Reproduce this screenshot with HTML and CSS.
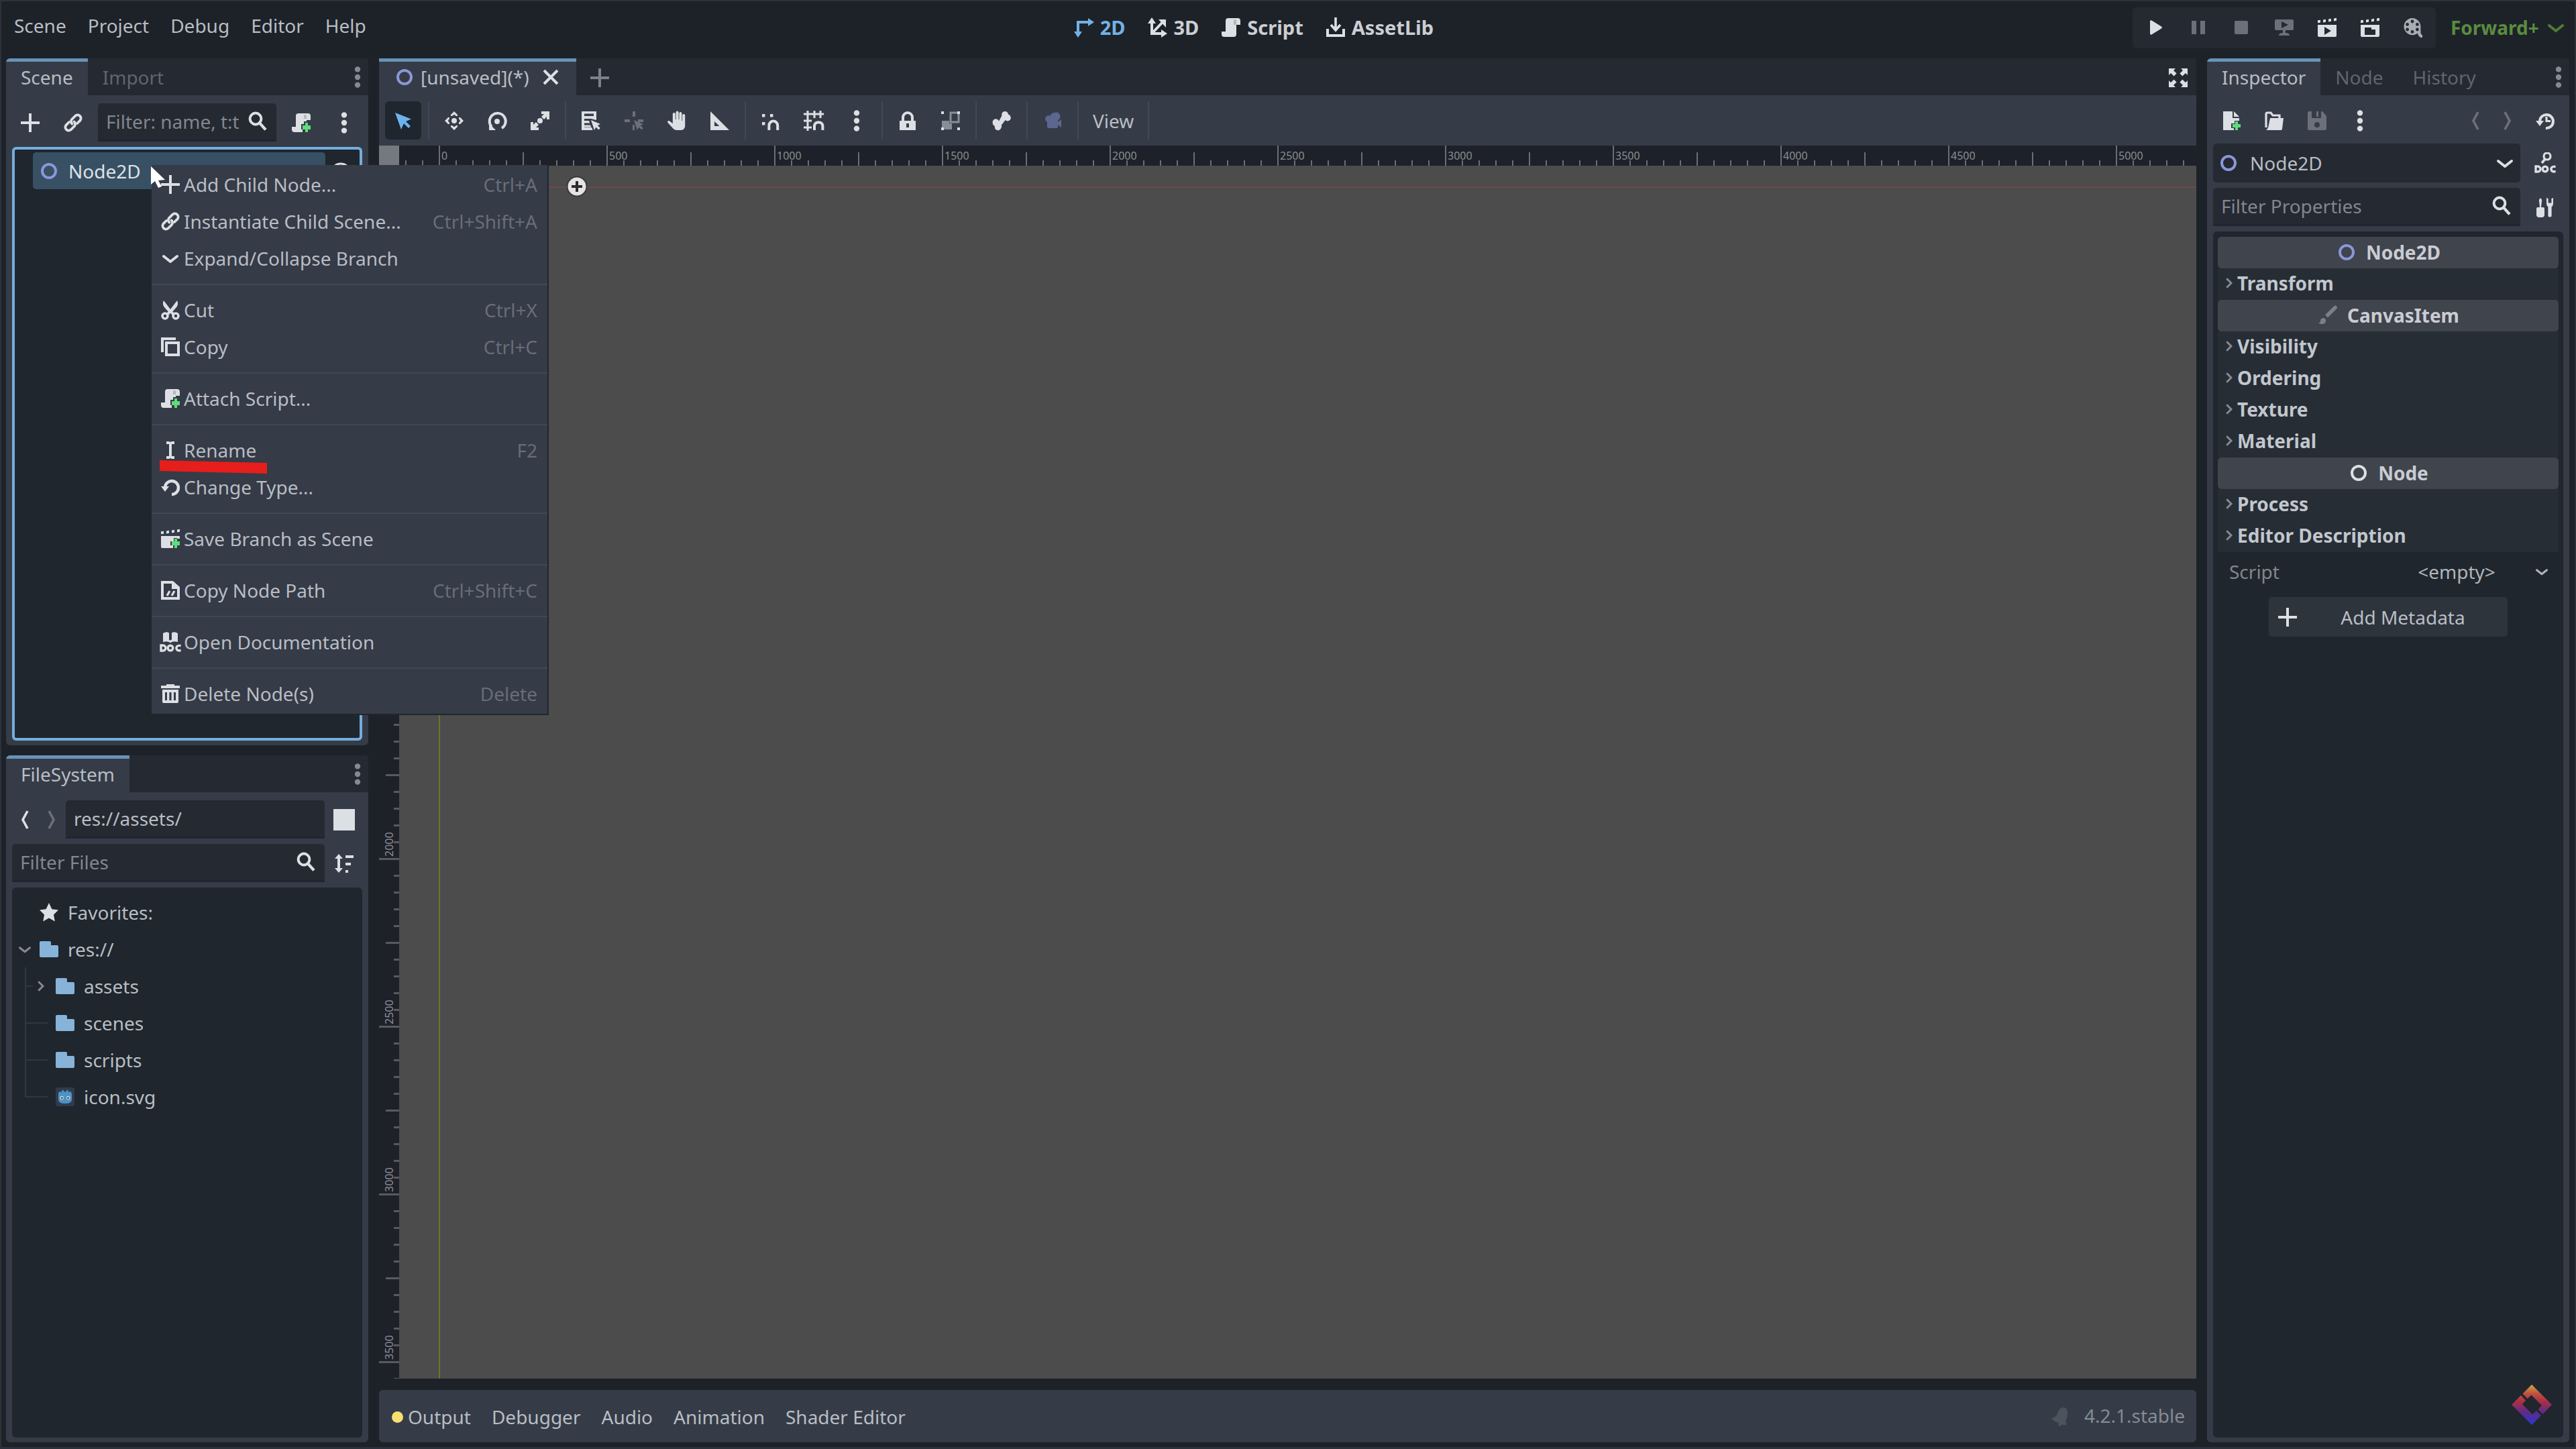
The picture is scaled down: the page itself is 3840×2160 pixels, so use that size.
FILE: index.html
```html
<!DOCTYPE html>
<html lang="en">
  <head>
    <meta charset="UTF-8" />
    <title>Godot Engine</title>
    <link rel="stylesheet" href="styles.css">
  </head>
  <body>
    <!-- Icon set -->
    <svg class="sprite" xmlns="http://www.w3.org/2000/svg">
      <symbol id="add" viewBox="0 0 16 16"><path d="M7 1v6H1v2h6v6h2V9h6V7H9V1z"/></symbol>
      <symbol id="link" viewBox="0 0 16 16"><g fill="none" stroke="currentColor" stroke-width="1.9" stroke-linecap="round"><path d="M7.2 8.800a2.500 2.500 0 0 1-.2-3.300l2.800-2.800a2.500 2.500 0 0 1 3.500 3.500L11 8.500"/><path d="M8.800 7.200a2.500 2.500 0 0 1 .2 3.300l-2.800 2.800a2.500 2.500 0 0 1-3.500-3.500L5 7.500"/></g></symbol>
      <symbol id="search" viewBox="0 0 16 16"><circle cx="6.5" cy="6" r="4.2" fill="none" stroke="currentColor" stroke-width="2"/><path d="M9.6 9.3l4.4 4.9" stroke="currentColor" stroke-width="2.2"/></symbol>
      <symbol id="dots" viewBox="0 0 16 16"><circle cx="8" cy="2.2" r="2.1"/><circle cx="8" cy="8" r="2.1"/><circle cx="8" cy="13.8" r="2.1"/></symbol>
      <symbol id="script" viewBox="0 0 16 16"><path d="M6 1a2 2 0 0 0-2 2v8H1v2a2 2 0 0 0 2 2h7a2 2 0 0 0 2-2V6h3V3a2 2 0 0 0-2-2z"/><path d="M12 6V3a1 1 0 0 0-2 0v3z" fill="#b4b7bb"/></symbol>
      <symbol id="script-add" viewBox="0 0 16 16"><path d="M6 1a2 2 0 0 0-2 2v8H1v2a2 2 0 0 0 2 2h6v-2H8V9h2V7h2V6h3V3a2 2 0 0 0-2-2z"/><path d="M12 5V3a1 1 0 0 0-2 0v2z" fill="#b4b7bb"/><path d="M11 8v2H9v3h2v2h2v-2h2v-3h-2V8z" fill="#5fdc7c"/></symbol>
      <symbol id="node" viewBox="0 0 16 16"><circle cx="8" cy="8" r="5" fill="none" stroke="currentColor" stroke-width="2"/></symbol>
      <symbol id="down" viewBox="0 0 16 16"><path d="M3 6.500l5 4 5-4" fill="none" stroke="currentColor" stroke-width="2" stroke-linecap="round" stroke-linejoin="round"/></symbol>
      <symbol id="right" viewBox="0 0 16 16"><path d="M5.500 3.500L10 8l-4.500 4.500" fill="none" stroke="currentColor" stroke-width="1.900"/></symbol>
      <symbol id="prev" viewBox="0 0 16 16"><path d="M10 1.500L6.500 8l3.500 6.500" fill="none" stroke="currentColor" stroke-width="1.800"/></symbol>
      <symbol id="next" viewBox="0 0 16 16"><path d="M6 1.500L9.500 8 6 14.500" fill="none" stroke="currentColor" stroke-width="1.800"/></symbol>
      <symbol id="cut" viewBox="0 0 16 16"><path d="M3 1C2 3 2.500 4.500 3.500 6L7 10l2 0 3.500-4C13.500 4.500 14 3 13 1L8 7.500z"/><circle cx="4" cy="12.500" r="2" fill="none" stroke="currentColor" stroke-width="1.800"/><circle cx="12" cy="12.500" r="2" fill="none" stroke="currentColor" stroke-width="1.800"/><path d="M6 11l2-2 2 2" fill="none" stroke="currentColor" stroke-width="2"/></symbol>
      <symbol id="copy" viewBox="0 0 16 16"><path d="M2 12V2h10M5 5h9v9H5z" fill="none" stroke="currentColor" stroke-width="2"/></symbol>
      <symbol id="rename" viewBox="0 0 16 16"><path d="M5 1.500h2l1 .5 1-.5h2v2H9v9h2v2H9l-1-.5-1 .5H5v-2h2v-9H5z"/></symbol>
      <symbol id="reload" viewBox="0 0 16 16"><path d="M4 8a5 5 0 1 1 5 5.500" fill="none" stroke="currentColor" stroke-width="2.200"/><path d="M1 7.500h6L4 11.500z"/></symbol>
      <symbol id="clap-add" viewBox="0 0 16 16"><path d="M1 2.600l2-.2v2l-2 .2zM5 2.200l2-.3v2l-2 .3zM9 1.700l2-.3v2l-2 .3zM13 1.200l2-.3v2l-2 .3z"/><path d="M1 6h14v2h-2V7.500h-2.500V10H8v3h2v2H2a1 1 0 0 1-1-1z"/><path d="M11 8v2H9v3h2v2h2v-2h2v-3h-2V8z" fill="#5fdc7c"/></symbol>
      <symbol id="path" viewBox="0 0 16 16"><path d="M2 2h7.500L14 6v8H2z" fill="none" stroke="currentColor" stroke-width="2"/><path d="M9 1v6h5z"/><path d="M5.500 12l2-3.500M9 12l2-3.500" stroke="currentColor" stroke-width="1.600"/></symbol>
      <symbol id="doc" viewBox="0 0 16 16"><path d="M2.500 1.500Q5 0 7 1.200v5q.5 1 2 0v-5Q11 0 13.500 1.500V8Q10 7 8 8.600 6 7 2.500 8z"/><g fill="none" stroke="currentColor" stroke-width="1.700"><path d="M1 10.500v4h1.500a2 2 0 0 0 0-4z"/><circle cx="8" cy="12.500" r="1.900"/><path d="M15.800 10.700h-1.500a1.800 1.800 0 0 0 0 3.700h1.500"/></g></symbol>
      <symbol id="doc-search" viewBox="0 0 16 16"><circle cx="9.500" cy="3" r="2.500" fill="none" stroke="currentColor" stroke-width="1.600"/><path d="M8 5L5.500 8" stroke="currentColor" stroke-width="1.800"/><g fill="none" stroke="currentColor" stroke-width="1.700"><path d="M1 10.500v4h1.500a2 2 0 0 0 0-4z"/><circle cx="8" cy="12.500" r="1.900"/><path d="M15.800 10.700h-1.500a1.800 1.800 0 0 0 0 3.700h1.500"/></g></symbol>
      <symbol id="trash" viewBox="0 0 16 16"><path d="M5 1h6v1h4v2H1V2h4z"/><path fill-rule="evenodd" d="M2 5h12v9a1 1 0 0 1-1 1H3a1 1 0 0 1-1-1zm2 2v6h1.500V7zm3.200 0v6h1.600V7zm3.300 0v6H12V7z"/></symbol>
      <symbol id="close" viewBox="0 0 16 16"><path d="M3 3l10 10M13 3L3 13" stroke="currentColor" stroke-width="2"/></symbol>
      <symbol id="expand" viewBox="0 0 16 16"><path d="M1 1h5L4.500 2.500l2.300 2.300-2 2L2.500 4.500 1 6zM15 1h-5l1.500 1.500-2.300 2.300 2 2 2.300-2.300L15 6zM1 15h5l-1.500-1.500 2.300-2.300-2-2-2.300 2.300L1 10zM15 15h-5l1.500-1.500-2.300-2.300 2-2 2.300 2.300L15 10z"/></symbol>
      <symbol id="select" viewBox="0 0 16 16"><path d="M2 2l4.500 12.500 2-4.500 3.500 3.500 1.500-1.500L10 8.500 14 6.700z"/></symbol>
      <symbol id="move" viewBox="0 0 16 16"><circle cx="8" cy="8" r="2"/><path d="M8 1l2.500 2.500v1h-1L8 3.400 6.500 4.500h-1v-1zM8 15l2.500-2.500v-1h-1L8 12.600l-1.500-1.100h-1v1zM1 8l2.500-2.500h1v1L3.400 8l1.100 1.500v1h-1zM15 8l-2.500-2.500h-1v1L12.600 8l-1.100 1.500v1h1z"/></symbol>
      <symbol id="rotate" viewBox="0 0 16 16"><circle cx="8" cy="8.500" r="2"/><path d="M11.500 13.500A6 6 0 1 0 4 12.500" fill="none" stroke="currentColor" stroke-width="2"/><path d="M2 10v5h5z"/></symbol>
      <symbol id="scale" viewBox="0 0 16 16"><circle cx="8" cy="8" r="2"/><path d="M9 1h6v6h-2V5l-2 2-2-2 2-2H9zM1 9h2v2l2-2 2 2-2 2h2v2H1z"/></symbol>
      <symbol id="list" viewBox="0 0 16 16"><path fill-rule="evenodd" d="M1 1h11v6.500L8 6.500H3V8h3.500l.6 1.800H3v1.400h4.500l.7 1.600H3V13h5.500l.8 2H1zm2 1.800v1.700h7V2.800z"/><path d="M8 7.500l2.500 7.500 1.200-2.300 2 2 1.200-1.200-2-2L15 10.500z"/></symbol>
      <symbol id="pivot" viewBox="0 0 16 16"><path d="M7 1h2v4H7zM1 7h4v2H1zM11 7h4v2h-4zM7 11h1.500v4H7z"/><path d="M8 7.500l2.500 7.500 1.200-2.300 2 2 1.200-1.200-2-2L15 10.500z"/></symbol>
      <symbol id="hand" viewBox="0 0 16 16"><path d="M7.300 1.800a1 1 0 0 1 2 0V7h.4V2.500a1 1 0 0 1 2 0V8h.4V4a1 1 0 0 1 2 0v8a3 3 0 0 1-3 3H8c-1.500 0-2.500-.8-3.500-2L1.300 9.500C.5 8.200 2 7.600 2.800 8.400L4.900 10V3a1 1 0 0 1 2 0v4h.4z"/></symbol>
      <symbol id="ruler" viewBox="0 0 16 16"><path fill-rule="evenodd" d="M1 1l14 14H1zm3 7.500V12h3.700z"/></symbol>
      <symbol id="snap" viewBox="0 0 16 16"><path d="M1.500 3h2.200v2.200H1.500zM7.500 3h2.200v2.200H7.500zM1.500 9h2.200v2.200H1.500z"/><path d="M6.700 15v-3.500a3.200 3.200 0 0 1 6.400 0V15" fill="none" stroke="currentColor" stroke-width="2"/></symbol>
      <symbol id="grid" viewBox="0 0 16 16"><path d="M3.500 .500v15M8.500 .500V6M13 .500V6M.500 3h15M.500 8h6M.500 13h6" stroke="currentColor" stroke-width="1.500"/><path d="M8.500 15v-3.500a3.200 3.200 0 0 1 6.200 0V15" fill="none" stroke="currentColor" stroke-width="2"/></symbol>
      <symbol id="lock" viewBox="0 0 16 16"><path d="M4.500 8V5.500a3.500 3.500 0 0 1 7 0V8" fill="none" stroke="currentColor" stroke-width="2"/><path fill-rule="evenodd" d="M2 8h12v7H2zm5 2v3h2v-3z"/></symbol>
      <symbol id="group" viewBox="0 0 16 16"><path d="M1.500 8H7v2h2v4.500H1.500z" opacity=".5"/><path d="M8 2h6v7H8z" fill="none" stroke="currentColor" stroke-width="1.500" opacity=".5"/><path d="M1 1h2v2H1zM13 1h2v2h-2zM1 13h2v2H1zM13 13h2v2h-2z"/></symbol>
      <symbol id="bone" viewBox="0 0 16 16"><path d="M10.500 1a2.400 2.400 0 0 0-2.300 3.200L6 8.300a2.400 2.400 0 0 0-4.600 1.500A2.400 2.400 0 0 0 3 12a2.400 2.400 0 0 0 4.600 1.500 2.400 2.400 0 0 0 .3-2.300L10.800 7.500a2.400 2.400 0 0 0 4-2.300A2.400 2.400 0 0 0 13 3.300 2.400 2.400 0 0 0 10.500 1z"/></symbol>
      <symbol id="camera" viewBox="0 0 16 16"><path d="M9.500 2a3 3 0 0 0-3 2.300A2.500 2.500 0 1 0 4 9v3.500a1 1 0 0 0 1 1h6a1 1 0 0 0 1-1V11l2.500 2V7L12 9V7.500A3 3 0 0 0 9.500 2z"/></symbol>
      <symbol id="w2d" viewBox="0 0 16 16"><path d="M3.500 12V4H12" fill="none" stroke="currentColor" stroke-width="2"/><path d="M.5 11h6l-3 4.500zM11 1l4.500 3L11 7z"/></symbol>
      <symbol id="w3d" viewBox="0 0 16 16"><path d="M4 4v8.500h8M4.500 12L12 4" fill="none" stroke="currentColor" stroke-width="2"/><path d="M1 5l3-4.500L7 5zM11 9.500l4.500 3-4.500 3zM9 2h5.500v6z"/></symbol>
      <symbol id="lib" viewBox="0 0 16 16"><path d="M2 9v5h12V9" fill="none" stroke="currentColor" stroke-width="2"/><path d="M8 .5V9M4.500 6L8 10l3.500-4" fill="none" stroke="currentColor" stroke-width="1.800"/></symbol>
      <symbol id="play" viewBox="0 0 16 16"><path d="M4 3.500v9a.8.8 0 0 0 1.200.7l7.300-4.500a.8.8 0 0 0 0-1.400L5.200 2.800A.8.8 0 0 0 4 3.500z"/></symbol>
      <symbol id="pause" viewBox="0 0 16 16"><path d="M3 3h3.500v10H3zM9.500 3H13v10H9.500z"/></symbol>
      <symbol id="stop" viewBox="0 0 16 16"><rect x="3" y="3" width="10" height="10" rx="1"/></symbol>
      <symbol id="remote" viewBox="0 0 16 16"><path fill-rule="evenodd" d="M2 2h12a1 1 0 0 1 1 1v6a1 1 0 0 1-1 1H9v2q3 0 3 2H4q0-2 3-2v-2H2a1 1 0 0 1-1-1V3a1 1 0 0 1 1-1zm4 1.500v5l5-2.500z"/></symbol>
      <symbol id="clap-play" viewBox="0 0 16 16"><path d="M1 2.600l2-.2v2l-2 .2zM5 2.200l2-.3v2l-2 .3zM9 1.700l2-.3v2l-2 .3zM13 1.200l2-.3v2l-2 .3z"/><path fill-rule="evenodd" d="M1 6h14v8a1 1 0 0 1-1 1H2a1 1 0 0 1-1-1zm5 1.500v6l5-3z"/></symbol>
      <symbol id="clap-dir" viewBox="0 0 16 16"><path d="M1 2.600l2-.2v2l-2 .2zM5 2.200l2-.3v2l-2 .3zM9 1.700l2-.3v2l-2 .3zM13 1.200l2-.3v2l-2 .3z"/><path fill-rule="evenodd" d="M1 6h14v8a1 1 0 0 1-1 1H2a1 1 0 0 1-1-1zm3 2v5.500h8V9.500H9V8z"/></symbol>
      <symbol id="reel" viewBox="0 0 16 16"><path fill-rule="evenodd" d="M7.500 1a6.300 6.300 0 1 0 4 11.200c.3 2 1.500 3.300 3.500 3.300v-2c-1.500 0-1.300-2-1.300-6.200A6.300 6.300 0 0 0 7.500 1zm0 1.300a1.200 1.200 0 1 1 0 2.400 1.200 1.200 0 0 1 0-2.400zM3.800 4.500a1.200 1.200 0 1 1 0 2.400 1.200 1.200 0 0 1 0-2.400zm7.400 0a1.200 1.200 0 1 1 0 2.400 1.200 1.200 0 0 1 0-2.400zM3.800 8.300a1.200 1.200 0 1 1 0 2.400 1.200 1.200 0 0 1 0-2.400zm7.400 0a1.200 1.200 0 1 1 0 2.400 1.200 1.200 0 0 1 0-2.400zM7.500 10a1.200 1.200 0 1 1 0 2.400 1.200 1.200 0 0 1 0-2.400z"/></symbol>
      <symbol id="file-add" viewBox="0 0 16 16"><path d="M2 1h7v5h5v2h-3.500v2H8v3.500h2V15H2z"/><path d="M10 1l4 4h-4z"/><path d="M11 8.500v2H9v2.500h2v2h2v-2h2v-2.500h-2v-2z" fill="#5fdc7c"/></symbol>
      <symbol id="folder-open" viewBox="0 0 16 16"><path d="M2 13V3a1 1 0 0 1 1-1h2.500l1.500 2h5v2" fill="none" stroke="currentColor" stroke-width="1.600"/><path d="M5 6h10l-1 8a1 1 0 0 1-1 1H2q1.500-1 2-4z"/></symbol>
      <symbol id="save" viewBox="0 0 16 16"><path fill-rule="evenodd" d="M2 1h10l3 3.500V14a1 1 0 0 1-1 1H2a1 1 0 0 1-1-1V2a1 1 0 0 1 1-1zm2 0v5h7V1H9v4H7.500V1zm4 8a2 2 0 1 0 0 4 2 2 0 0 0 0-4z"/></symbol>
      <symbol id="history" viewBox="0 0 16 16"><path d="M4 8a5 5 0 1 1 4.500 5.500" fill="none" stroke="currentColor" stroke-width="2"/><path d="M1 8h6l-3 4zM8.200 5h1.600v2.500H12V9H8.200z"/></symbol>
      <symbol id="tools" viewBox="0 0 16 16"><path d="M4.500 1L5.600 2.500 5 8h1.500a1 1 0 0 1 1 1v4.500a2 2 0 0 1-2 2h-2a2 2 0 0 1-2-2V9a1 1 0 0 1 1-1H4L3.400 2.500zM9 1v4q0 2 1.200 2.600V14a1.300 1.300 0 0 0 2.600 0V7.600Q14 7 14 5V1l-1.300.5v3.300h-2.400V1.500z"/></symbol>
      <symbol id="sort" viewBox="0 0 16 16"><path d="M4 1l3 3.500H5v7h2L4 15l-3-3.500h2v-7H1zM9 2h6v2H9zM9 7.500h4v2H9zM9 13h2v2H9z"/></symbol>
      <symbol id="star" viewBox="0 0 16 16"><path d="M8 1l2.200 4.600 4.800.6-3.500 3.500.9 5L8 12.200 3.600 14.700l.9-5L1 6.200l4.800-.6z"/></symbol>
      <symbol id="folder" viewBox="0 0 16 16"><path d="M2 2a1 1 0 0 0-1 1v10a1 1 0 0 0 1 1h12a1 1 0 0 0 1-1V6a1 1 0 0 0-1-1H9.500V3a1 1 0 0 0-1-1z"/></symbol>
      <symbol id="godot" viewBox="0 0 16 16"><rect x="1" y="1" width="14" height="14" rx="2" fill="#313b4e"/><path d="M3 5.500l1-1.500 1.500.5.3-1.500h1l.5 1.200h1.400L9.200 3h1l.3 1.500L12 4l1 1.500V10q0 3-5 3t-5-3z" fill="#4d92c4"/><circle cx="5.600" cy="8.800" r="1.400" fill="#bcd6e6"/><circle cx="10.400" cy="8.800" r="1.400" fill="#bcd6e6"/><circle cx="5.700" cy="8.900" r=".7" fill="#313b4e"/><circle cx="10.300" cy="8.900" r=".7" fill="#313b4e"/></symbol>
      <symbol id="brush" viewBox="0 0 16 16"><path d="M14.500 1.200a1.500 1.500 0 0 0-2 0L6 7.800l2 2 6.500-6.500a1.500 1.500 0 0 0 0-2.100zM4.500 10a2.400 2.400 0 0 0-2 2.500c0 .8-.7 1-1.500 1 1.500 1.700 5.500 1.500 5.500-1.500a2 2 0 0 0-2-2z"/></symbol>
      <symbol id="bell" viewBox="0 0 16 16"><path d="M11 1.500Q7 1.500 6 6 5 9 1.500 9.500L4 12l3 1-.5 2 2 .5 1-1.500 1.500 1 2-1-1-2 1.500-4Q14 2 11 1.500z"/></symbol>
      <symbol id="eye" viewBox="0 0 16 16"><path d="M1 9q2-6 7-6t7 6q-2 5-7 5t-7-5z" fill="none" stroke="currentColor" stroke-width="1.600"/><circle cx="8" cy="9" r="2"/></symbol>
    </svg>

    <header class="topbar">
      <nav class="main-menu">
        <button>Scene</button>
        <button>Project</button>
        <button>Debug</button>
        <button>Editor</button>
        <button>Help</button>
      </nav>
      <div class="workspaces">
        <button class="active"><svg class="icon"><use href="#w2d"/></svg>2D</button>
        <button><svg class="icon"><use href="#w3d"/></svg>3D</button>
        <button><svg class="icon"><use href="#script"/></svg>Script</button>
        <button><svg class="icon"><use href="#lib"/></svg>AssetLib</button>
      </div>
      <div class="run-area">
        <div class="run-bar">
          <button class="tool" aria-label="Run Project"><svg class="icon"><use href="#play"/></svg></button>
          <button class="tool off" aria-label="Pause"><svg class="icon"><use href="#pause"/></svg></button>
          <button class="tool off" aria-label="Stop"><svg class="icon"><use href="#stop"/></svg></button>
          <button class="tool off" aria-label="Remote Debug"><svg class="icon"><use href="#remote"/></svg></button>
          <button class="tool" aria-label="Run Current Scene"><svg class="icon"><use href="#clap-play"/></svg></button>
          <button class="tool" aria-label="Run Specific Scene"><svg class="icon"><use href="#clap-dir"/></svg></button>
          <button class="tool dim" aria-label="Movie Maker"><svg class="icon"><use href="#reel"/></svg></button>
        </div>
        <div class="renderer">
          <select aria-label="Renderer"><option>Forward+</option></select>
          <svg class="icon"><use href="#down"/></svg>
        </div>
      </div>
    </header>

    <main class="editor">
      <!-- Left docks -->
      <div class="column">
        <section class="dock">
          <div class="tabs">
            <button class="tab active">Scene</button>
            <button class="tab">Import</button>
            <button class="tab-dots" aria-label="Dock options"><svg class="icon"><use href="#dots"/></svg></button>
          </div>
          <div class="dock-body">
            <div class="row">
              <button class="tool" aria-label="Add Child Node"><svg class="icon"><use href="#add"/></svg></button>
              <button class="tool" aria-label="Instantiate Child Scene"><svg class="icon"><use href="#link"/></svg></button>
              <div class="field">
                <input type="text" aria-label="Filter nodes" placeholder="Filter: name, t:type">
                <svg class="icon"><use href="#search"/></svg>
              </div>
              <button class="tool" aria-label="Attach Script"><svg class="icon"><use href="#script-add"/></svg></button>
              <button class="tool" aria-label="More"><svg class="icon"><use href="#dots"/></svg></button>
            </div>
            <div class="tree scene-tree">
              <div class="scene-node">
                <svg class="icon node2d"><use href="#node"/></svg>Node2D
              </div>
              <svg class="icon"><use href="#eye"/></svg>
            </div>
          </div>
        </section>

        <section class="dock">
          <div class="tabs">
            <button class="tab active">FileSystem</button>
            <button class="tab-dots" aria-label="Dock options"><svg class="icon"><use href="#dots"/></svg></button>
          </div>
          <div class="dock-body">
            <div class="row tight">
              <button class="arrow" aria-label="Back"><svg class="icon"><use href="#prev"/></svg></button>
              <button class="arrow off" aria-label="Forward"><svg class="icon"><use href="#next"/></svg></button>
              <div class="field"><input class="path" type="text" aria-label="Path" value="res://assets/"></div>
              <button class="tool" aria-label="Toggle split mode"><span class="split"></span></button>
            </div>
            <div class="row tight">
              <div class="field">
                <input type="text" aria-label="Filter files" placeholder="Filter Files">
                <svg class="icon"><use href="#search"/></svg>
              </div>
              <button class="tool" aria-label="Sort"><svg class="icon"><use href="#sort"/></svg></button>
            </div>
            <ul class="tree files">
              <li><span class="fold"></span><svg class="icon"><use href="#star"/></svg>Favorites:</li>
              <li><svg class="icon fold"><use href="#down"/></svg><svg class="icon folder"><use href="#folder"/></svg>res://</li>
              <li class="child foldable"><svg class="icon fold"><use href="#right"/></svg><svg class="icon folder"><use href="#folder"/></svg>assets</li>
              <li class="child"><span class="fold"></span><svg class="icon folder"><use href="#folder"/></svg>scenes</li>
              <li class="child"><span class="fold"></span><svg class="icon folder"><use href="#folder"/></svg>scripts</li>
              <li class="child last"><span class="fold"></span><svg class="icon"><use href="#godot"/></svg>icon.svg</li>
            </ul>
          </div>
        </section>
      </div>

      <!-- Viewport -->
      <div class="column center">
        <section class="scene-view">
          <div class="tabs">
            <button class="tab active scene-tab"><svg class="icon node2d"><use href="#node"/></svg>[unsaved](*)<svg class="icon close"><use href="#close"/></svg></button>
            <button class="tool plus" aria-label="New scene"><svg class="icon"><use href="#add"/></svg></button>
            <button class="tool push" aria-label="Distraction free mode"><svg class="icon"><use href="#expand"/></svg></button>
          </div>
          <div class="toolbar">
            <button class="tool pressed" aria-label="Select"><svg class="icon"><use href="#select"/></svg></button>
            <span class="sep"></span>
            <button class="tool" aria-label="Move"><svg class="icon"><use href="#move"/></svg></button>
            <button class="tool" aria-label="Rotate"><svg class="icon"><use href="#rotate"/></svg></button>
            <button class="tool" aria-label="Scale"><svg class="icon"><use href="#scale"/></svg></button>
            <span class="sep"></span>
            <button class="tool" aria-label="List selectable"><svg class="icon"><use href="#list"/></svg></button>
            <button class="tool off" aria-label="Pivot"><svg class="icon"><use href="#pivot"/></svg></button>
            <button class="tool" aria-label="Pan"><svg class="icon"><use href="#hand"/></svg></button>
            <button class="tool" aria-label="Ruler"><svg class="icon"><use href="#ruler"/></svg></button>
            <span class="sep"></span>
            <button class="tool" aria-label="Smart snap"><svg class="icon"><use href="#snap"/></svg></button>
            <button class="tool" aria-label="Grid snap"><svg class="icon"><use href="#grid"/></svg></button>
            <button class="tool" aria-label="Snap options"><svg class="icon"><use href="#dots"/></svg></button>
            <span class="sep"></span>
            <button class="tool" aria-label="Lock"><svg class="icon"><use href="#lock"/></svg></button>
            <button class="tool" aria-label="Group"><svg class="icon"><use href="#group"/></svg></button>
            <span class="sep"></span>
            <button class="tool" aria-label="Skeleton"><svg class="icon"><use href="#bone"/></svg></button>
            <span class="sep"></span>
            <button class="tool camera" aria-label="Override camera"><svg class="icon"><use href="#camera"/></svg></button>
            <span class="sep"></span>
            <button class="view">View</button>
            <span class="sep"></span>
          </div>
          <div class="canvas-grid">
            <div class="corner"></div>
            <div class="ruler-x">
              <span>0</span><span>500</span><span>1000</span><span>1500</span><span>2000</span><span>2500</span><span>3000</span><span>3500</span><span>4000</span><span>4500</span><span>5000</span>
            </div>
            <div class="ruler-y">
              <span>0</span><span>500</span><span>1000</span><span>1500</span><span>2000</span><span>2500</span><span>3000</span><span>3500</span>
            </div>
            <div class="canvas">
              <div class="game-rect"></div>
              <div class="axis-x"></div>
              <div class="axis-y"></div>
              <svg class="pivot-mark" viewBox="0 0 32 32"><circle cx="16" cy="16" r="14.500" fill="#e6e3e4" stroke="#3a3a3c" stroke-width="2"/><path d="M16 8v16M8 16h16" stroke="#2c2c2e" stroke-width="4"/></svg>
            </div>
          </div>
        </section>
        <footer class="bottom-panel">
          <button><i class="dot"></i>Output</button>
          <button>Debugger</button>
          <button>Audio</button>
          <button>Animation</button>
          <button>Shader Editor</button>
          <svg class="icon bell"><use href="#bell"/></svg>
          <span class="version">4.2.1.stable</span>
        </footer>
      </div>

      <!-- Inspector -->
      <div class="column">
        <section class="dock">
          <div class="tabs">
            <button class="tab active">Inspector</button>
            <button class="tab">Node</button>
            <button class="tab">History</button>
            <button class="tab-dots" aria-label="Dock options"><svg class="icon"><use href="#dots"/></svg></button>
          </div>
          <div class="dock-body">
            <div class="row resource-row">
              <button class="tool" aria-label="New resource"><svg class="icon"><use href="#file-add"/></svg></button>
              <button class="tool" aria-label="Load resource"><svg class="icon"><use href="#folder-open"/></svg></button>
              <button class="tool off" aria-label="Save resource"><svg class="icon"><use href="#save"/></svg></button>
              <button class="tool" aria-label="Resource options"><svg class="icon"><use href="#dots"/></svg></button>
              <button class="arrow off push" aria-label="Previous"><svg class="icon"><use href="#prev"/></svg></button>
              <button class="arrow off" aria-label="Next"><svg class="icon"><use href="#next"/></svg></button>
              <button class="tool" aria-label="History"><svg class="icon"><use href="#history"/></svg></button>
            </div>
            <div class="row">
              <div class="field object">
                <svg class="icon node2d"><use href="#node"/></svg>
                <select aria-label="Edited object"><option>Node2D</option></select>
                <svg class="icon"><use href="#down"/></svg>
              </div>
              <button class="tool" aria-label="Open documentation"><svg class="icon"><use href="#doc-search"/></svg></button>
            </div>
            <div class="row">
              <div class="field">
                <input type="text" aria-label="Filter properties" placeholder="Filter Properties">
                <svg class="icon"><use href="#search"/></svg>
              </div>
              <button class="tool" aria-label="Manage properties"><svg class="icon"><use href="#tools"/></svg></button>
            </div>
            <div class="tree props">
              <h2><svg class="icon node2d"><use href="#node"/></svg>Node2D</h2>
              <button class="group"><svg><use href="#right"/></svg>Transform</button>
              <h2><svg class="icon grey"><use href="#brush"/></svg>CanvasItem</h2>
              <button class="group"><svg><use href="#right"/></svg>Visibility</button>
              <button class="group"><svg><use href="#right"/></svg>Ordering</button>
              <button class="group"><svg><use href="#right"/></svg>Texture</button>
              <button class="group"><svg><use href="#right"/></svg>Material</button>
              <h2><svg class="icon"><use href="#node"/></svg>Node</h2>
              <button class="group"><svg><use href="#right"/></svg>Process</button>
              <button class="group"><svg><use href="#right"/></svg>Editor Description</button>
              <div class="prop">
                <label for="script-value">Script</label>
                <select id="script-value"><option>&lt;empty&gt;</option></select>
                <svg><use href="#down"/></svg>
              </div>
              <button class="metadata"><svg class="icon"><use href="#add"/></svg><span>Add Metadata</span></button>
            </div>
          </div>
        </section>
      </div>
    </main>

    <!-- Node context menu -->
    <div class="popup" role="menu">
      <button role="menuitem"><svg class="icon"><use href="#add"/></svg>Add Child Node...<kbd>Ctrl+A</kbd></button>
      <button role="menuitem"><svg class="icon"><use href="#link"/></svg>Instantiate Child Scene...<kbd>Ctrl+Shift+A</kbd></button>
      <button role="menuitem"><svg class="icon"><use href="#down"/></svg>Expand/Collapse Branch</button>
      <hr>
      <button role="menuitem"><svg class="icon"><use href="#cut"/></svg>Cut<kbd>Ctrl+X</kbd></button>
      <button role="menuitem"><svg class="icon"><use href="#copy"/></svg>Copy<kbd>Ctrl+C</kbd></button>
      <hr>
      <button role="menuitem"><svg class="icon"><use href="#script-add"/></svg>Attach Script...</button>
      <hr>
      <button role="menuitem" class="marked"><svg class="icon"><use href="#rename"/></svg>Rename<kbd>F2</kbd>
        <svg class="marker" viewBox="0 0 160 20"><path d="M0 0l160 4v16L0 16z" fill="#e61e1c"/></svg>
      </button>
      <button role="menuitem"><svg class="icon"><use href="#reload"/></svg>Change Type...</button>
      <hr>
      <button role="menuitem"><svg class="icon"><use href="#clap-add"/></svg>Save Branch as Scene</button>
      <hr>
      <button role="menuitem"><svg class="icon"><use href="#path"/></svg>Copy Node Path<kbd>Ctrl+Shift+C</kbd></button>
      <hr>
      <button role="menuitem"><svg class="icon"><use href="#doc"/></svg>Open Documentation</button>
      <hr>
      <button role="menuitem"><svg class="icon"><use href="#trash"/></svg>Delete Node(s)<kbd>Delete</kbd></button>
    </div>
    <svg class="cursor" viewBox="0 0 24 36"><path d="M1 1v27l6-5 5 10 5-2-5-9 10-1z" fill="#fff"/></svg>

    <svg class="brand" viewBox="0 0 60 60">
      <defs>
        <linearGradient id="brand-fill" x1="0" y1="0" x2="0" y2="60" gradientUnits="userSpaceOnUse">
          <stop offset="0" stop-color="#c9a945"/>
          <stop offset=".22" stop-color="#c0523f"/>
          <stop offset=".42" stop-color="#ab2f45"/>
          <stop offset=".7" stop-color="#5a2a8c"/>
          <stop offset="1" stop-color="#2b39d0"/>
        </linearGradient>
      </defs>
      <path fill="url(#brand-fill)" d="M30 0l30 30-13.500 14-7-7 5.500-6-15.500-15.500L23.500 21l-7-7.500zM14 16l7 7.500-5 6L31 44.500l6-5.500 7 7-14 14L0 30z"/>
    </svg>
  </body>
</html>
```
FILE: styles.css
```css
* {
  box-sizing: border-box;
}

body {
  margin: 0;
  height: 100vh;
  display: flex;
  flex-direction: column;
  padding: 0 8px 7px 7px;
  background: #1d2229;
  border: 2px solid #2c313b;
  border-bottom-width: 3px;
  color: #b9bdc4;
  font-family: "Noto Sans", sans-serif;
  font-size: 28px;
  line-height: 38px;
  overflow: hidden;
}

button,
input,
select {
  font: inherit;
  color: inherit;
  background: none;
  border: 0;
  margin: 0;
  padding: 0;
  border-radius: 0;
  outline: 0;
  appearance: none;
}

button {
  display: flex;
  align-items: center;
  white-space: nowrap;
}

.sprite {
  position: absolute;
  width: 0;
  height: 0;
}

.icon {
  width: 32px;
  height: 32px;
  flex: none;
  fill: currentColor;
  color: #dcdfe3;
}

.icon.node2d {
  color: #8b97d8;
}

/* Top bar */
.topbar {
  display: flex;
  align-items: center;
  justify-content: space-between;
  height: 78px;
  margin-bottom: 7px;
}

.main-menu,
.workspaces {
  display: flex;
  gap: 8px;
}

.main-menu button {
  padding: 0 12px 6px;
}

.workspaces button {
  gap: 8px;
  padding: 0 12px;
  font-size: 29px;
  font-weight: bold;
  color: #cbced3;
}

.workspaces .active,
.workspaces .active .icon {
  color: #72b2e6;
}

.run-area,
.renderer {
  display: flex;
  align-items: center;
}

.run-bar {
  display: flex;
  gap: 10px;
  padding: 2px 7px;
  margin-right: 22px;
  background: #242932;
  border-radius: 6px;
}

.renderer {
  gap: 9px;
  padding-right: 4px;
  font-weight: bold;
  color: #5a8c3e;
}

.renderer .icon {
  color: #4d7c38;
}

.tool {
  width: 54px;
  height: 57px;
  flex: none;
  justify-content: center;
}

.off .icon {
  color: #6b707a;
}

.dim .icon {
  color: #a9adb3;
}

.push {
  margin-left: auto;
}

/* Docks */
.editor {
  flex: 1;
  min-height: 0;
  display: grid;
  grid-template-columns: 540px 1fr 540px;
  gap: 16px;
}

.column {
  display: flex;
  flex-direction: column;
  gap: 15px;
  min-width: 0;
  min-height: 0;
}

.center {
  gap: 17px;
}

.dock {
  flex: 1;
  display: flex;
  flex-direction: column;
  background: #353c47;
  border-radius: 6px;
  overflow: hidden;
}

.tabs {
  display: flex;
  height: 55px;
  background: #252932;
}

.tab {
  padding: 0 22px 4px;
  border-top: 5px solid transparent;
  color: #60656f;
}

.tab.active {
  background: #353c47;
  border-color: #6893b6;
  color: #b9bdc4;
}

.tab-dots {
  margin-left: auto;
}

.tab-dots .icon {
  color: #858a92;
}

.dock-body {
  flex: 1;
  display: flex;
  flex-direction: column;
  gap: 8px;
  padding: 12px 9px 7px;
}

.row {
  display: flex;
  align-items: center;
  gap: 10px;
}

.tight {
  gap: 2px;
}

.resource-row {
  height: 52px;
}

.field {
  flex: 1;
  min-width: 0;
  height: 57px;
  display: flex;
  align-items: center;
  gap: 12px;
  padding: 0 12px;
  background: #252932;
  border-bottom: 3px solid #212530;
  border-radius: 5px 5px 0 0;
}

.field input,
.field select {
  flex: 1;
  min-width: 0;
}

.field input::placeholder {
  color: #82868f;
  opacity: 1;
}

.object {
  height: 58px;
  gap: 16px;
  padding: 0 7px;
  border-bottom: 0;
  border-radius: 5px;
}

.arrow {
  width: 38px;
  height: 57px;
  justify-content: center;
}

.split {
  width: 32px;
  height: 32px;
  background: #dcdfe3;
}

.tree {
  flex: 1;
  margin: 0;
  background: #1f262d;
  border-radius: 6px;
}

.scene-tree {
  display: flex;
  align-items: flex-start;
  gap: 7px;
  padding: 4px 0 0 27px;
  border: 4px solid #74aedd;
}

.scene-tree > .icon {
  margin-top: 11px;
}

.scene-node {
  flex: none;
  width: 436px;
  height: 55px;
  display: flex;
  align-items: center;
  gap: 13px;
  padding-left: 8px;
  background: #385064;
  border-radius: 5px;
  color: #dfe2e6;
}

.files {
  list-style: none;
  padding: 9px 0 0 3px;
}

.files li {
  display: flex;
  align-items: center;
  height: 55px;
}

.files .icon {
  margin-right: 12px;
}

.files .fold {
  width: 32px;
  height: 24px;
  margin-right: 4px;
  color: #858a91;
}

.files .folder {
  color: #87b3d9;
}

/* guide lines */
.files .child {
  padding-left: 24px;
  background:
    linear-gradient(#313840, #313840) 16px 0 / 2px 100% no-repeat,
    linear-gradient(#313840, #313840) 16px 50% / 34px 2px no-repeat;
}

.files .foldable {
  background-size: 2px 100%, 12px 2px;
}

.files .last {
  background-size: 2px 50%, 34px 2px;
}

/* Viewport */
.scene-view {
  flex: 1;
  min-height: 0;
  display: flex;
  flex-direction: column;
}

.scene-tab {
  gap: 8px;
}

.scene-tab .close {
  margin-left: 8px;
}

.plus {
  margin-left: 8px;
}

.plus .icon {
  color: #7d8189;
}

.toolbar {
  display: flex;
  align-items: center;
  gap: 10px;
  height: 75px;
  padding: 0 9px;
  background: #353c47;
}

.pressed {
  background: #1f262e;
  border-radius: 6px;
}

.pressed .icon {
  color: #6bb4f0;
}

.camera .icon {
  color: #5d6690;
}

.sep {
  width: 2px;
  height: 57px;
  background: #424955;
}

.view {
  padding: 0 11px;
}

.canvas-grid {
  flex: 1;
  min-height: 0;
  display: grid;
  grid-template-columns: 30px 1fr;
  grid-template-rows: 30px 1fr;
}

.corner {
  background: #75787f;
}

.ruler-x,
.ruler-y {
  display: flex;
  overflow: hidden;
  color: #8a8d93;
  font-size: 16px;
  line-height: 20px;
}

.ruler-x {
  padding-left: 60px;
  background:
    repeating-linear-gradient(to right, #6b6e74 0 2px, transparent 2px 250px) 59px 0 / 100% 30px no-repeat,
    repeating-linear-gradient(to right, #6b6e74 0 2px, transparent 2px 125px) 59px 100% / 100% 20px no-repeat,
    repeating-linear-gradient(to right, #6b6e74 0 2px, transparent 2px 25px) 9px 100% / 100% 8px no-repeat,
    #1e2129;
}

.ruler-x span {
  flex: none;
  width: 250px;
  padding: 5px 3px;
}

.ruler-y {
  flex-direction: column;
  background:
    repeating-linear-gradient(#565b60 0 3px, transparent 3px 250px) 0 32px / 30px 100% no-repeat,
    repeating-linear-gradient(#565b60 0 3px, transparent 3px 125px) 100% 32px / 20px 100% no-repeat,
    repeating-linear-gradient(#565b60 0 3px, transparent 3px 25px) 100% 7px / 8px 100% no-repeat,
    #1e2129;
}

.ruler-y span {
  flex: none;
  height: 250px;
  padding: 3px 5px;
  writing-mode: vertical-rl;
  transform: rotate(180deg);
}

.ruler-y span:first-child {
  height: 33px;
}

.canvas {
  position: relative;
  overflow: hidden;
  background: #4c4c4c;
}

.axis-x,
.axis-y,
.game-rect,
.pivot-mark {
  position: absolute;
}

.axis-x {
  top: 31px;
  left: 0;
  width: 100%;
  height: 2px;
  background: #73464a;
}

.axis-y {
  top: 0;
  left: 59px;
  width: 2px;
  height: 100%;
  background: #66752f;
}

.game-rect {
  top: 32px;
  left: 60px;
  width: 576px;
  height: 324px;
  border: 1px solid #504e53;
}

.pivot-mark {
  top: 15px;
  left: 249px;
  width: 32px;
  height: 32px;
}

.bottom-panel {
  display: flex;
  align-items: center;
  gap: 8px;
  height: 78px;
  padding: 0 17px 0 8px;
  background: #353c47;
  border-radius: 6px;
}

.bottom-panel button {
  padding: 2px 12px 0 11px;
}

.dot {
  width: 17px;
  height: 17px;
  margin-right: 7px;
  border-radius: 50%;
  background: #f7e070;
}

.bell {
  margin-left: auto;
  color: #4b535d;
}

.version {
  margin-left: 12px;
  padding-bottom: 2px;
  color: #858b95;
}

/* Inspector */
.props {
  padding: 8px 7px;
}

.props h2 {
  display: flex;
  align-items: center;
  justify-content: center;
  gap: 13px;
  height: 47px;
  margin: 0;
  padding-bottom: 2px;
  background: #3f444d;
  border-radius: 5px;
  font-size: 28px;
  color: #c9ccd3;
}

.icon.grey {
  color: #7b8087;
}

.group {
  width: 100%;
  height: 47px;
  padding: 0 5px 4px;
  background: #262d35;
  font-weight: bold;
  color: #c2c6cd;
}

.group svg {
  width: 24px;
  height: 24px;
  fill: none;
  color: #868b92;
}

.prop {
  display: flex;
  align-items: center;
  height: 58px;
  padding-left: 17px;
  color: #82868d;
}

.prop label {
  flex: 1;
}

.prop select {
  width: 204px;
  text-align: center;
  text-align-last: center;
  color: #b0b4ba;
}

.prop svg {
  width: 24px;
  height: 24px;
  margin: 0 13px;
  color: #b0b4ba;
}

.metadata {
  width: 70%;
  height: 59px;
  margin: 9px auto 0;
  padding-left: 12px;
  background: #2d343c;
  border-radius: 5px;
}

.metadata span {
  flex: 1;
}

/* Popup menu */
.popup {
  position: absolute;
  top: 246px;
  left: 226px;
  width: 592px;
  padding: 2px 0;
  background: #353b47;
  border: solid #1f262c;
  border-width: 0 2px 2px 0;
}

.popup button {
  width: 100%;
  height: 55px;
  gap: 4px;
  padding: 0 15px 2px 12px;
}

.popup kbd {
  margin-left: auto;
  font: inherit;
  color: #686d78;
}

.popup hr {
  height: 2px;
  margin: 10px 0;
  border: 0;
  background: #414753;
}

.popup .marked {
  position: relative;
}

.marker {
  position: absolute;
  top: 42px;
  left: 12px;
  width: 160px;
  height: 20px;
}

.cursor {
  position: absolute;
  top: 247px;
  left: 224px;
  width: 24px;
  height: 36px;
}

.brand {
  position: absolute;
  right: 36px;
  bottom: 36px;
  width: 60px;
  height: 60px;
}
```
